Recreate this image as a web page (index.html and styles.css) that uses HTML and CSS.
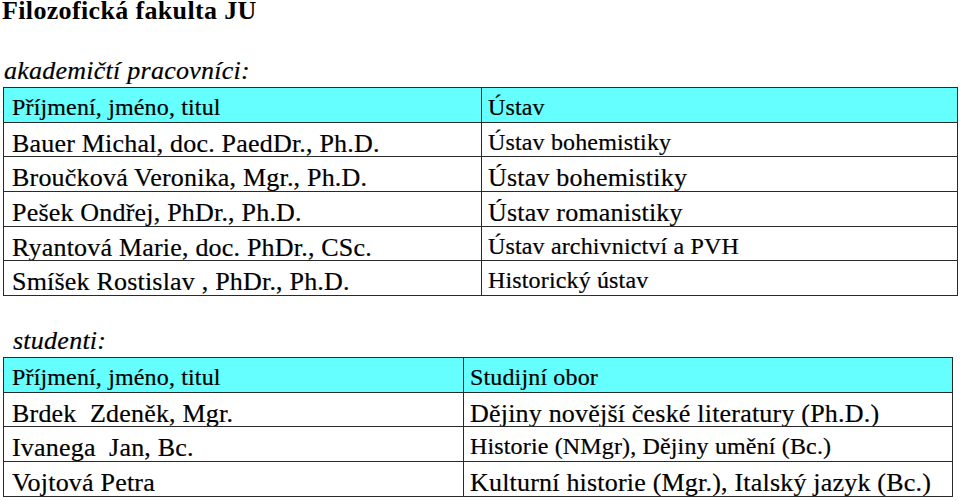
FILE: index.html
```html
<!DOCTYPE html>
<html lang="cs">
<head>
<meta charset="utf-8">
<title>Filozofická fakulta JU</title>
<link rel="stylesheet" href="styles.css">
</head>
<body>
<div class="page">
  <h1 class="title">Filozofická fakulta JU</h1>
  <p class="section section-first">akademičtí pracovníci:</p>
  <table class="grid grid-staff">
    <colgroup><col class="c-staff-1"><col class="c-staff-2"></colgroup>
    <tr class="head">
      <td class="sm">Příjmení, jméno, titul</td>
      <td class="sm right">Ústav</td>
    </tr>
    <tr>
      <td class="lg">Bauer Michal, doc. PaedDr., Ph.D.</td>
      <td class="sm right">Ústav bohemistiky</td>
    </tr>
    <tr>
      <td class="lg">Broučková Veronika, Mgr., Ph.D.</td>
      <td class="lg right">Ústav bohemistiky</td>
    </tr>
    <tr>
      <td class="lg">Pešek Ondřej, PhDr., Ph.D.</td>
      <td class="lg right">Ústav romanistiky</td>
    </tr>
    <tr>
      <td class="lg">Ryantová Marie, doc. PhDr., CSc.</td>
      <td class="sm right">Ústav archivnictví a PVH</td>
    </tr>
    <tr>
      <td class="lg">Smíšek Rostislav , PhDr., Ph.D.</td>
      <td class="sm right">Historický ústav</td>
    </tr>
  </table>
  <p class="section section-second">studenti:</p>
  <table class="grid grid-students">
    <colgroup><col class="c-stud-1"><col class="c-stud-2"></colgroup>
    <tr class="head">
      <td class="sm">Příjmení, jméno, titul</td>
      <td class="sm right">Studijní obor</td>
    </tr>
    <tr>
      <td class="lg">Brdek&nbsp; Zdeněk, Mgr.</td>
      <td class="lg right">Dějiny novější české literatury (Ph.D.)</td>
    </tr>
    <tr>
      <td class="lg">Ivanega&nbsp; Jan, Bc.</td>
      <td class="sm right">Historie (NMgr), Dějiny umění (Bc.)</td>
    </tr>
    <tr>
      <td class="lg">Vojtová Petra</td>
      <td class="lg right">Kulturní historie (Mgr.), Italský jazyk (Bc.)</td>
    </tr>
  </table>
</div>
</body>
</html>
```

FILE: styles.css
```css
html, body {
  margin: 0;
  padding: 0;
  background: #ffffff;
}

body {
  font-family: "Liberation Serif", "Times New Roman", serif;
  color: #000000;
}

.page {
  padding-left: 3px;
  width: 957px;
}

.title {
  margin: 0 0 0 -1px;
  font-size: 26px;
  font-weight: bold;
  line-height: 22px;
  letter-spacing: 0.35px;
}

.section {
  margin: 0;
  font-style: italic;
  font-size: 26px;
  line-height: 32px;
  letter-spacing: 0.25px;
  padding-left: 1px;
  -webkit-text-stroke: 0.2px #000;
}

.section-first {
  margin-top: 33px;
}

.section-second {
  margin-top: 29px;
  padding-left: 10px;
}

.grid {
  border-collapse: collapse;
  table-layout: fixed;
}

.grid td {
  border: 1px solid #2a2a2a;
  padding: 8px 4px 0 8px;
  vertical-align: top;
  white-space: nowrap;
  overflow: hidden;
  height: 34.67px;
  box-sizing: border-box;
  -webkit-text-stroke: 0.2px #000;
}

.grid td.right {
  padding-left: 6px;
}

.grid tr {
  height: 34.67px;
}

.grid .head td {
  background: #66ffff;
}

.grid td.lg {
  font-size: 26px;
  line-height: 25px;
  letter-spacing: 0.2px;
}

.grid td.sm {
  font-size: 24px;
  line-height: 23px;
  letter-spacing: 0.15px;
}

.grid-staff {
  width: 954px;
}

.c-staff-1 { width: 478px; }
.c-staff-2 { width: 476px; }

.grid-students {
  width: 949px;
}

.c-stud-1 { width: 460px; }
.c-stud-2 { width: 489px; }
```
